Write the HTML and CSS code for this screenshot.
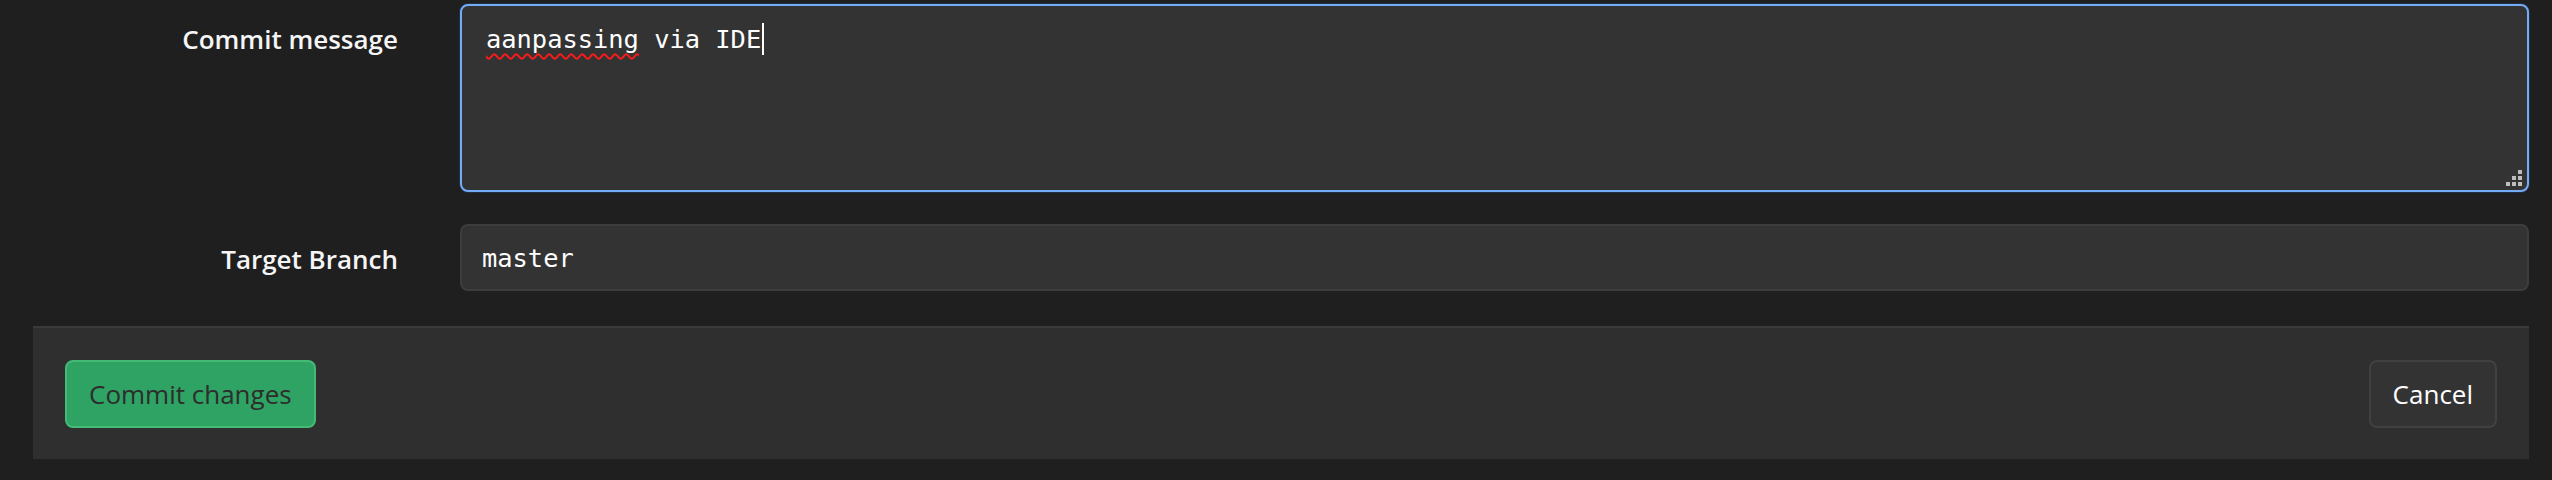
FILE: index.html
```html
<!DOCTYPE html>
<html lang="en">
<head>
<meta charset="utf-8">
<title>Commit</title>
<link rel="stylesheet" href="styles.css">
</head>
<body>
<main class="page">
  <form class="form">
    <div class="field field-message">
      <label class="label">Commit message</label>
      <div class="textarea">
        <span class="line"><span class="misspelled">aanpassing</span> via IDE<span class="caret"></span></span>
        <span class="grip">
          <i class="d d1"></i><i class="d d2"></i><i class="d d3"></i>
          <i class="d d4"></i><i class="d d5"></i><i class="d d6"></i>
        </span>
      </div>
    </div>
    <div class="field field-branch">
      <label class="label">Target Branch</label>
      <div class="input">master</div>
    </div>
    <div class="footer">
      <button type="button" class="btn btn-commit">Commit changes</button>
      <button type="button" class="btn btn-cancel">Cancel</button>
    </div>
  </form>
</main>
</body>
</html>
```
FILE: styles.css
```css
html, body {
  margin: 0;
  padding: 0;
  background: #1f1f1f;
  height: 100%;
}
body {
  font-family: "Open Sans", "Noto Sans", sans-serif;
  color: #f2f2f2;
}
.page {
  padding: 4px 23px 0 33px;
}
.form {
  display: flex;
  flex-direction: column;
}
.field {
  display: grid;
  grid-template-columns: 365px 1fr;
  column-gap: 62px;
}
.field-branch {
  margin-top: 32px;
}
.label {
  text-align: right;
  font-weight: 600;
  font-size: 26px;
  line-height: 39px;
  padding-top: 16px;
  color: #f5f5f5;
}
.textarea {
  position: relative;
  box-sizing: border-box;
  height: 188px;
  background: #333333;
  border: 2px solid #74abf5;
  border-radius: 8px;
  box-shadow: 0 0 0 1px rgba(40, 80, 140, 0.35);
  padding: 14px 24px;
  font-family: "DejaVu Sans Mono", "Liberation Mono", monospace;
  font-size: 25.4px;
  line-height: 38px;
  color: #ffffff;
}
.line {
  display: inline-flex;
  align-items: center;
  white-space: pre;
}
.misspelled {
  text-decoration: underline wavy #ff1a1a;
  text-decoration-thickness: 2px;
  text-underline-offset: 5px;
  text-decoration-skip-ink: none;
}
.caret {
  display: inline-block;
  width: 1.5px;
  height: 32px;
  background: #ffffff;
  margin-left: 1px;
}
.grip {
  position: absolute;
  right: 5px;
  bottom: 4px;
  width: 16px;
  height: 16px;
}
.d {
  position: absolute;
  width: 4px;
  height: 4px;
  background: #bdbdbd;
}
.d1 { right: 0; top: 0; }
.d2 { right: 0; top: 6px; }
.d3 { right: 6px; top: 6px; }
.d4 { right: 0; top: 12px; }
.d5 { right: 6px; top: 12px; }
.d6 { right: 12px; top: 12px; }
.input {
  box-sizing: border-box;
  height: 67px;
  display: flex;
  align-items: center;
  background: #333333;
  border: 2px solid #3d3d3d;
  border-radius: 8px;
  padding: 0 20px;
  font-family: "DejaVu Sans Mono", "Liberation Mono", monospace;
  font-size: 25.4px;
  line-height: 38px;
  color: #ffffff;
}
.footer {
  margin-top: 35px;
  box-sizing: border-box;
  height: 133px;
  background: #2f2f2f;
  border-top: 2px solid #3a3a3a;
  padding: 32px 32px 31px;
  display: flex;
  justify-content: space-between;
  align-items: center;
}
.btn {
  box-sizing: border-box;
  height: 68px;
  padding: 0 22px;
  border-radius: 8px;
  font-family: "Open Sans", "Noto Sans", sans-serif;
  font-size: 26px;
  line-height: 39px;
  cursor: pointer;
}
.btn-commit {
  background: #2ea363;
  border: 2px solid #43bb77;
  color: #2d2d2d;
}
.btn-cancel {
  background: #333333;
  border: 2px solid #414141;
  color: #ffffff;
}
```
